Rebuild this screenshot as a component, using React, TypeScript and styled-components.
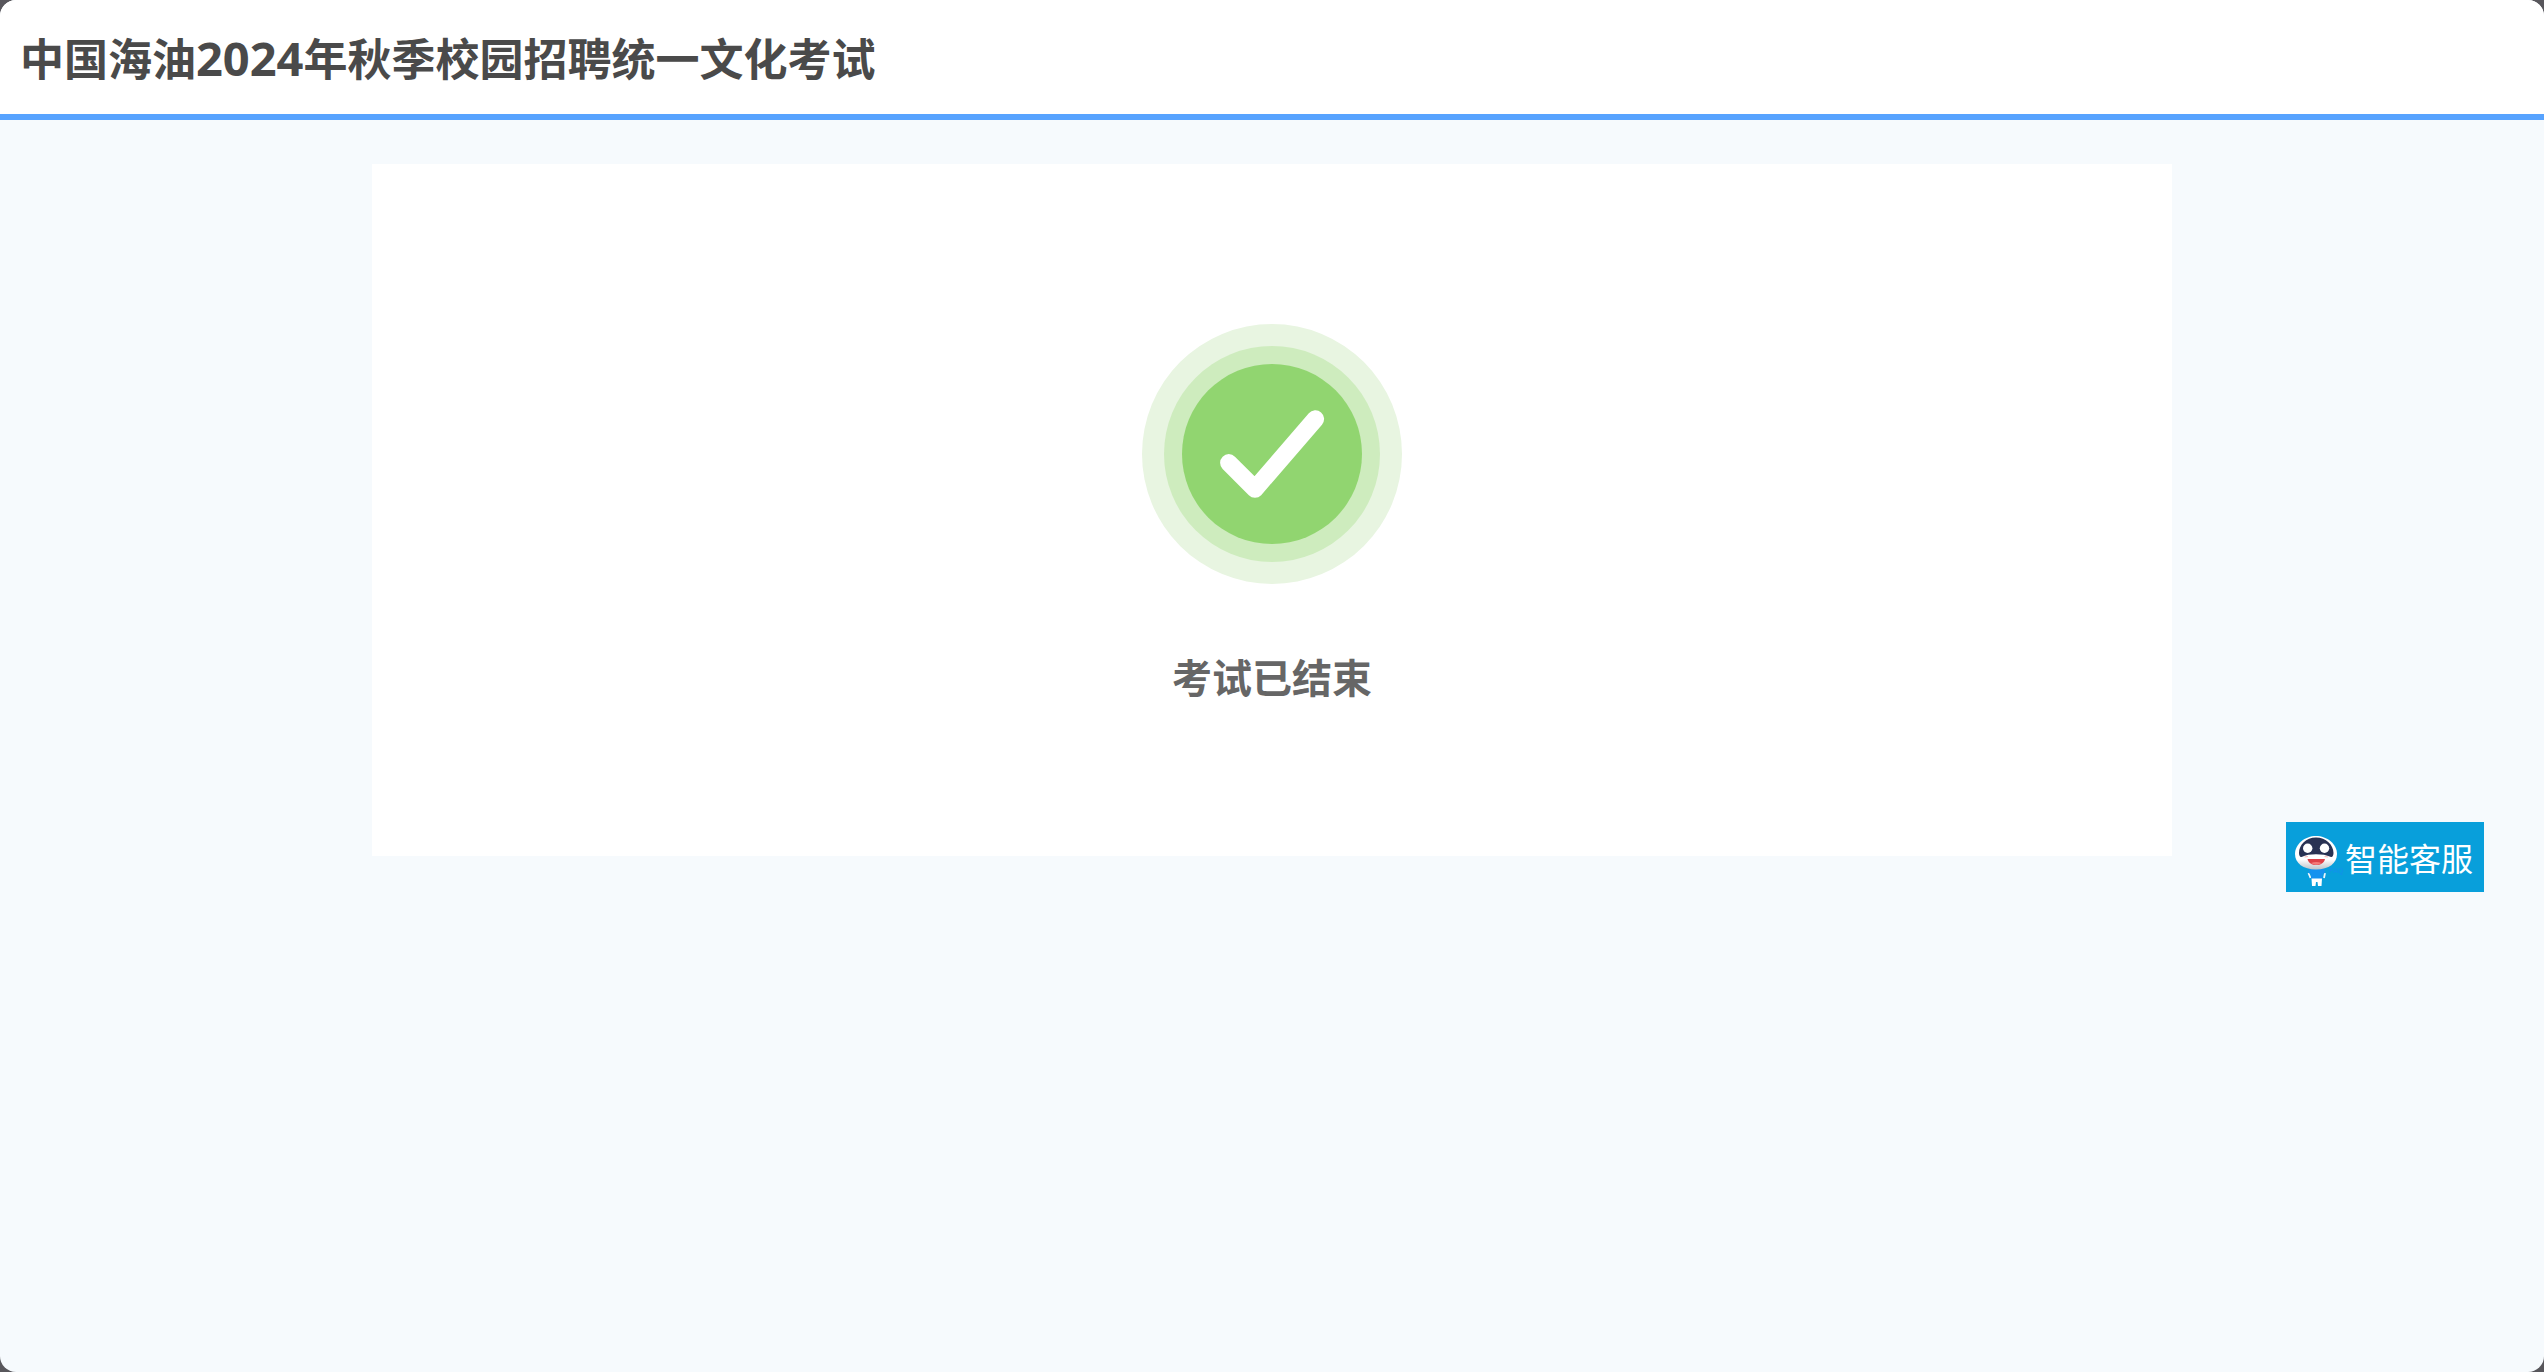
import React from "react";
import styled, { createGlobalStyle } from "styled-components";

const GlobalStyle = createGlobalStyle`
  *, *::before, *::after {
    box-sizing: border-box;
  }
  body {
    margin: 0;
    background: #58575c;
    font-family: "Noto Sans CJK SC", sans-serif;
  }
`;

const Page = styled.div`
  display: flex;
  flex-direction: column;
  min-height: 100vh;
  overflow: hidden;
  border-radius: 16px;
  background: #f6fafd;
`;

const Header = styled.header`
  display: flex;
  align-items: center;
  height: 120px;
  padding: 0 20px;
  border-bottom: 6px solid #57a3ff;
  background: #fff;
`;

const Title = styled.h1`
  margin: 0;
  font-size: 44px;
  font-weight: 700;
  line-height: 64px;
  color: #4a4a4a;
`;

const Year = styled.span`
  font-family: "Open Sans", "Noto Sans CJK SC", sans-serif;
  font-size: 47px;
  line-height: 1;
`;

const Main = styled.main`
  display: flex;
  justify-content: center;
  padding: 44px 24px;
`;

const ResultCard = styled.section`
  display: flex;
  flex-direction: column;
  align-items: center;
  gap: 62px;
  width: 100%;
  max-width: 1800px;
  padding: 160px 24px 150px;
  background: #fff;
`;

const StatusIcon = styled.svg`
  display: block;
  width: 260px;
  height: 260px;
`;

const Message = styled.p`
  margin: 0;
  font-size: 40px;
  font-weight: 700;
  line-height: 60px;
  color: #666;
`;

const ServiceButton = styled.button`
  position: fixed;
  right: 60px;
  bottom: 480px;
  display: flex;
  align-items: center;
  gap: 7px;
  width: 198px;
  height: 70px;
  padding: 0 8px;
  border: 0;
  background: #089fdb;
  color: #fff;
  font-family: inherit;
  font-size: 32px;
  line-height: 48px;
  white-space: nowrap;
  cursor: pointer;
`;

const RobotWrap = styled.span`
  position: relative;
  flex: none;
  width: 44px;
  height: 70px;
`;

const Robot = styled.svg`
  display: block;
  width: 44px;
  height: 70px;
`;

const FaqMark = styled.span`
  position: absolute;
  left: 35px;
  top: 44px;
  font-family: "Liberation Sans", Arial, sans-serif;
  font-size: 7px;
  font-weight: 700;
  line-height: 10px;
  color: #1094e8;
`;

function SuccessIcon() {
  return (
    <StatusIcon viewBox="0 0 260 260" aria-hidden="true">
      <circle cx="130" cy="130" r="130" fill="#e8f5e1" />
      <circle cx="130" cy="130" r="108" fill="#ceecbe" />
      <circle cx="130" cy="130" r="90" fill="#91d570" />
      <path
        d="M86.8 138.8 113 165 173.4 95"
        fill="none"
        stroke="#fff"
        strokeWidth="17.4"
        strokeLinecap="round"
        strokeLinejoin="round"
      />
    </StatusIcon>
  );
}

function RobotIcon() {
  return (
    <Robot viewBox="8 0 44 70" aria-hidden="true">
      <defs>
        <linearGradient id="head" x1="0" y1="0" x2="0" y2="1">
          <stop offset="0.7" stopColor="#fff" />
          <stop offset="1" stopColor="#bfc3c8" />
        </linearGradient>
      </defs>
      <path d="M22.500 51 L24.500 56 M39 51 L38 56" fill="none" stroke="#eef6fc" strokeWidth="1.800" />
      <path d="M23 47 H38.500 L39 51 L36.500 52 V57 H25 V52 L22.500 51 Z" fill="#1592ef" />
      <path d="M25.500 56.500 H36 L35.500 64 H32 L31.500 60 H30 L29.500 64 H26 Z" fill="#fff" />
      <path
        d="M30 14 C41 14 51 22 51 32 C51 41 43 47.500 30 47.500 C17 47.500 9 41 9 32 C9 22 19 14 30 14 Z"
        fill="url(#head)"
      />
      <path
        d="M30 15.500 C40 15.500 47.500 23 47.500 31 C47.500 33 46.500 35.500 45 35 C40 33 36 32.300 30 32.300 C24 32.300 20 33 15.500 35 C14 35.500 13 33 13 31 C13 23 20 15.500 30 15.500 Z"
        fill="#293253"
      />
      <circle cx="21.700" cy="26.300" r="4.700" fill="#fff" />
      <circle cx="38.500" cy="26.300" r="4.700" fill="#fff" />
      <path d="M21.500 37 H39 C38 41 34.500 43 30.200 43 C26 43 22.500 41 21.500 37 Z" fill="#de4148" />
      <path d="M25 41 C28 39.500 32.500 39.500 35.500 41 C32 43.400 28.500 43.400 25 41 Z" fill="#f47a78" />
      <path d="M18.500 35 L22 34.500 M38.500 34.500 L42 35" stroke="#f6b9b7" strokeWidth="1.200" />
    </Robot>
  );
}

export default function App() {
  return (
    <>
      <GlobalStyle />
      <Page>
        <Header>
          <Title>
            中国海油<Year>2024</Year>年秋季校园招聘统一文化考试
          </Title>
        </Header>
        <Main>
          <ResultCard>
            <SuccessIcon />
            <Message>考试已结束</Message>
          </ResultCard>
        </Main>
        <ServiceButton type="button">
          <RobotWrap>
            <RobotIcon />
            <FaqMark aria-hidden="true">FAQ</FaqMark>
          </RobotWrap>
          智能客服
        </ServiceButton>
      </Page>
    </>
  );
}
